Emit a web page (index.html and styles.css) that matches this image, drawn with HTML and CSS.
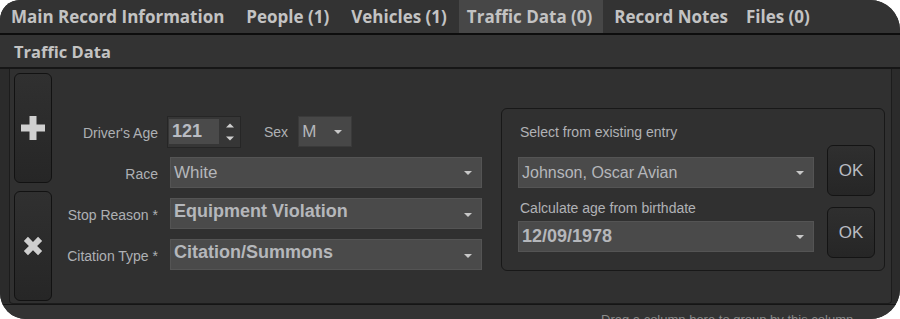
FILE: index.html
```html
<!DOCTYPE html>
<html>
<head>
<meta charset="utf-8">
<link rel="stylesheet" href="styles.css">
</head>
<body>
<div class="window">
  <nav class="tabs">
    <span class="tab">Main Record Information</span>
    <span class="tab">People (1)</span>
    <span class="tab">Vehicles (1)</span>
    <span class="tab active">Traffic Data (0)</span>
    <span class="tab">Record Notes</span>
    <span class="tab files">Files (0)</span>
  </nav>
  <div class="section-title">Traffic Data</div>
  <div class="body">
    <div class="panel">
      <div class="side-buttons">
        <button class="side-btn" aria-label="Add">
          <svg width="26" height="26" viewBox="0 0 26 26"><path d="M9.5 1h7v8.5H25v7h-8.5V25h-7v-8.5H1v-7h8.5z" fill="#cfcfcf"/></svg>
        </button>
        <button class="side-btn" aria-label="Remove">
          <svg width="22" height="22" viewBox="0 0 24 24"><path d="M2 6.5L6.5 2 12 7.5 17.5 2 22 6.5 16.5 12 22 17.5 17.5 22 12 16.5 6.5 22 2 17.5 7.5 12z" fill="#cfcfcf"/></svg>
        </button>
      </div>
      <div class="form">
        <span class="lbl">Driver's Age</span>
        <div class="age-row">
          <div class="spin">
            <span class="spin-val">121</span>
            <span class="spin-arrows">
              <svg width="10" height="22" viewBox="0 0 10 22"><path d="M1 6.5L5 2.5 9 6.5z M1 15.5L5 19.5 9 15.5z" fill="#d0d0d0"/></svg>
            </span>
          </div>
          <span class="lbl sex-lbl">Sex</span>
          <div class="select sex"><span class="val">M</span><span class="caret"></span></div>
        </div>
        <span class="lbl">Race</span>
        <div class="select"><span class="val">White</span><span class="caret"></span></div>
        <span class="lbl">Stop Reason *</span>
        <div class="select top"><span class="val bold">Equipment Violation</span><span class="caret"></span></div>
        <span class="lbl">Citation Type *</span>
        <div class="select top"><span class="val bold">Citation/Summons</span><span class="caret"></span></div>
      </div>
      <div class="group">
        <div class="block first">
          <div class="col">
            <span class="glbl">Select from existing entry</span>
            <div class="select wide"><span class="val">Johnson, Oscar Avian</span><span class="caret"></span></div>
          </div>
          <button class="ok">OK</button>
        </div>
        <div class="block second">
          <div class="col">
            <span class="glbl">Calculate age from birthdate</span>
            <div class="select wide"><span class="val bold">12/09/1978</span><span class="caret"></span></div>
          </div>
          <button class="ok">OK</button>
        </div>
      </div>
    </div>
  </div>
  <div class="footer">Drag a column here to group by this column</div>
</div>
</body>
</html>
```

FILE: styles.css
```css
* { box-sizing: border-box; }
html, body { margin: 0; padding: 0; background: #ffffff; }
body { width: 900px; height: 319px; overflow: hidden; }

.window {
  width: 900px;
  height: 319px;
  background: #2c2c2c;
  border-radius: 20px 30px 30px 26px;
  overflow: hidden;
  display: flex;
  flex-direction: column;
  font-family: "Liberation Sans", Arial, sans-serif;
}

.tabs {
  height: 35px;
  flex: none;
  background: #333333;
  border-bottom: 2px solid #0d0d0d;
  display: flex;
  padding-left: 0;
}
.tab {
  font-family: "Open Sans", sans-serif;
  font-weight: 700;
  font-size: 17px;
  color: #c3c3c3;
  padding: 0 11px;
  line-height: 33px;
  white-space: nowrap;
}
.tab.active { background: #474747; padding: 0 11px 0 8px; margin-left: 1px; }
.tab.files { padding-left: 7px; }

.section-title {
  height: 34px;
  flex: none;
  background: #333333;
  border-bottom: 2px solid #161616;
  padding-left: 14px;
  font-family: "Open Sans", sans-serif;
  font-weight: 700;
  font-size: 16.5px;
  line-height: 34px;
  color: #c3c3c3;
}

.body {
  height: 236px;
  flex: none;
  background: #2b2b2b;
  padding: 0 8px 0 9px;
  border-bottom: 1px solid #151515;
}
.panel {
  height: 235px;
  background: #303030;
  border: 1px solid #1c1c1c;
  border-top: none;
  border-radius: 0 0 4px 4px;
  display: flex;
  align-items: flex-start;
  padding: 4px 0 0 4px;
}

.side-buttons {
  display: flex;
  flex-direction: column;
  gap: 8px;
  flex: none;
}
.side-btn {
  width: 38px;
  height: 110px;
  border: 1px solid #121212;
  border-radius: 6px;
  background: linear-gradient(#303030, #262626);
  display: flex;
  align-items: center;
  justify-content: center;
  padding: 0;
}

.form {
  display: grid;
  grid-template-columns: 102px 312px;
  column-gap: 12px;
  grid-auto-rows: 31px;
  row-gap: 10px;
  margin-top: 43px;
  margin-left: 4px;
  align-items: center;
}
.lbl {
  font-size: 14px;
  color: #aeb0b4;
  text-align: right;
  white-space: nowrap;
  padding-top: 3px;
}
.age-row {
  display: flex;
  align-items: center;
  height: 32px;
  margin-left: -3px;
}
.spin {
  width: 74px;
  height: 32px;
  background: #363636;
  border: 1px solid #262626;
  display: flex;
  align-items: center;
  padding-left: 1px;
}
.spin-val {
  width: 50px;
  height: 25px;
  background: #4a4a4a;
  font-weight: 700;
  font-size: 18px;
  color: #b9bcc2;
  line-height: 25px;
  padding-left: 3px;
}
.spin-arrows {
  display: flex;
  margin-left: 6px;
}
.sex-lbl {
  margin-left: 23px;
  margin-right: 10px;
  padding-top: 0;
}
.select {
  height: 31px;
  background: #4a4a4a;
  border: 1px solid #545454;
  display: flex;
  align-items: center;
  justify-content: space-between;
  padding: 0 9px 0 3px;
  color: #b5b7bb;
  font-size: 17px;
}
.select.top { align-items: flex-start; padding-top: 2px; }
.select.top .caret { margin-top: 12px; }
.select.sex {
  width: 54px;
  height: 31px;
  background: #474747;
  border-color: #3a3a3a;
}
.val { white-space: nowrap; }
.val.bold { font-weight: 700; font-size: 18px; }
.caret {
  width: 0;
  height: 0;
  border-left: 4px solid transparent;
  border-right: 4px solid transparent;
  border-top: 4px solid #c8c8c8;
  flex: none;
}

.group {
  margin-left: 19px;
  margin-top: 35px;
  width: 384px;
  height: 163px;
  border: 1px solid #181818;
  border-radius: 6px;
  padding: 11px 8px 0 16px;
}
.block { display: flex; align-items: flex-start; }
.block.first { height: 76px; }
.col { display: flex; flex-direction: column; width: 296px; }
.glbl {
  font-size: 14px;
  color: #b0b2b6;
  line-height: 24px;
  padding-left: 2px;
}
.block.first .select { margin-top: 13px; }
.block.second .select { margin-top: 1px; }
.select.wide { width: 296px; height: 31px; font-size: 16px; }
.ok {
  width: 48px;
  height: 51px;
  margin-left: 13px;
  border: 1px solid #141414;
  border-radius: 6px;
  background: linear-gradient(#2f2f2f, #262626);
  color: #b9bcc2;
  font-family: "Liberation Sans", Arial, sans-serif;
  font-size: 17px;
  padding: 0;
}
.block.first .ok { margin-top: 25px; }
.block.second .ok { margin-top: 11px; }

.footer {
  flex: 1;
  background: #333333;
  font-size: 13px;
  color: #8a8a8a;
  padding: 7px 0 0 601px;
  white-space: nowrap;
}
```
